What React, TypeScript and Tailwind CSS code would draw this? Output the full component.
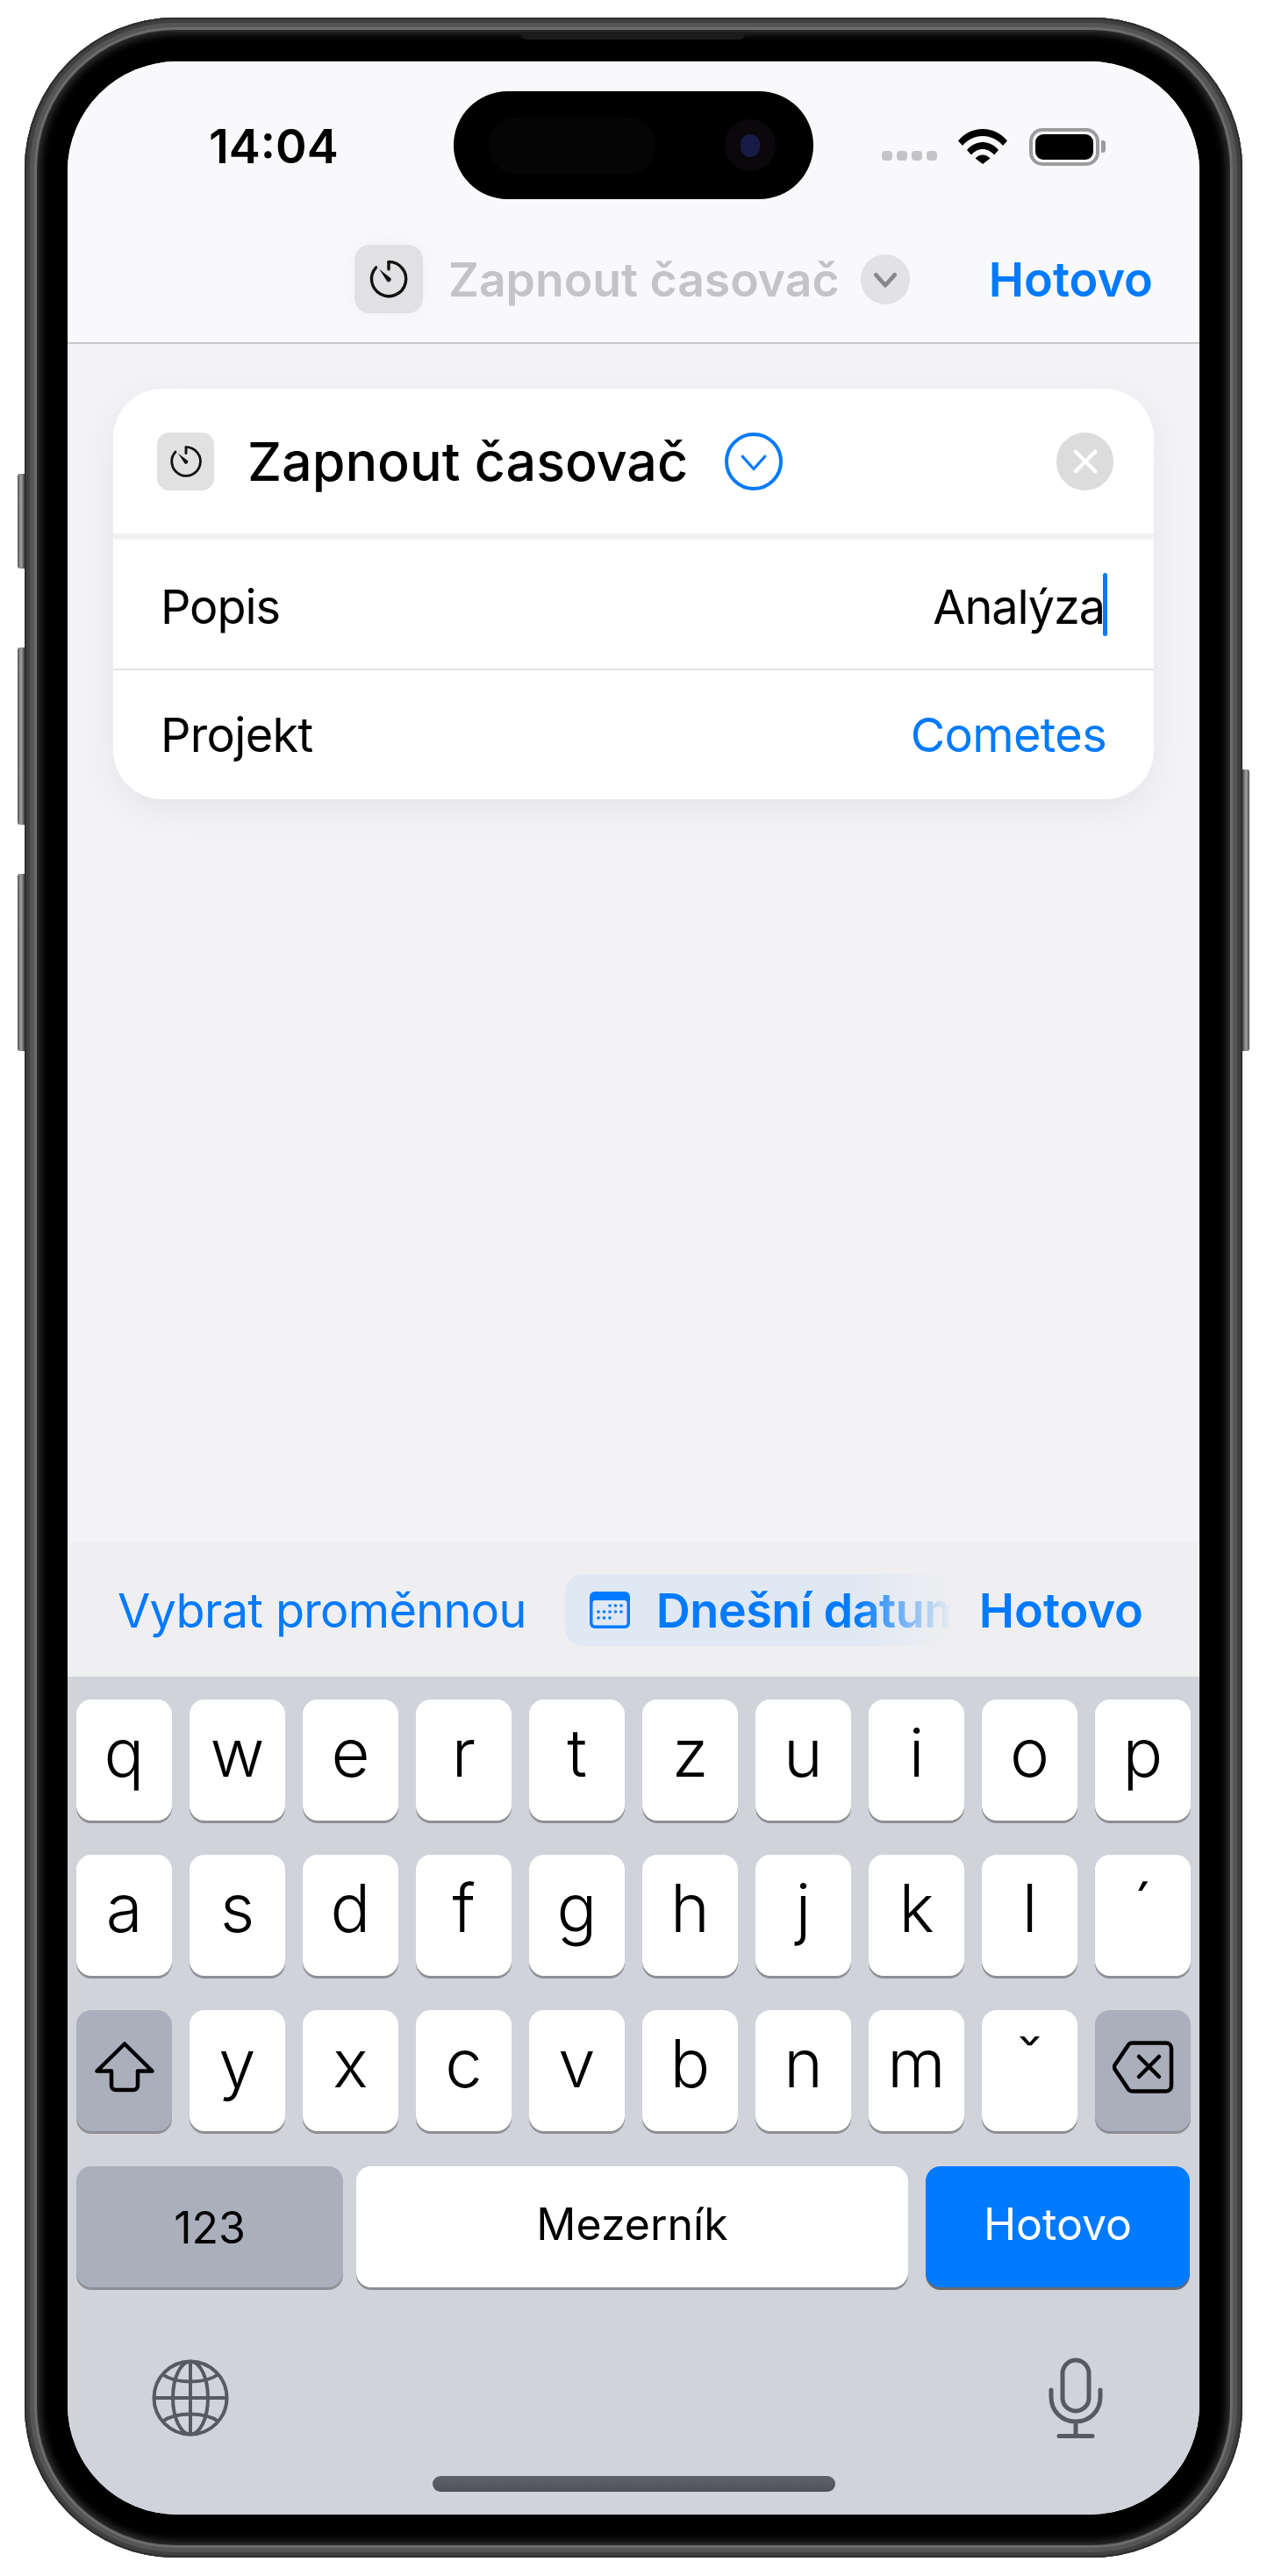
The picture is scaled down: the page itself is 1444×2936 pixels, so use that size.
const rows = [
  ["q", "w", "e", "r", "t", "z", "u", "i", "o", "p"],
  ["a", "s", "d", "f", "g", "h", "j", "k", "l", "´"],
];
const row3 = ["y", "x", "c", "v", "b", "n", "m", "ˇ"];

function TimerIcon({ className }: { className: string }) {
  return (
    <svg viewBox="0 0 24 24" fill="none" className={className}>
      <path d="M12 2.2a9.8 9.8 0 1 1-7.2 3.2" stroke="#111" strokeWidth="1.7" strokeLinecap="round" />
      <path d="M12 2.4v4" stroke="#111" strokeWidth="1.7" strokeLinecap="round" />
      <path d="M6.6 6.4l6.7 5.2a1.6 1.6 0 0 1-2 2z" fill="#111" />
    </svg>
  );
}

function Chevron({ className, color, width }: { className: string; color: string; width: number }) {
  return (
    <svg viewBox="0 0 24 24" fill="none" className={className}>
      <path d="M3.5 7.5L12 17l8.500-9.500" stroke={color} strokeWidth={width} strokeLinecap="round" strokeLinejoin="round" />
    </svg>
  );
}

function Key({ children }: { children: React.ReactNode }) {
  return (
    <div className="flex h-[138px] justify-center rounded-[17px] bg-white pt-[14px] text-[76px] font-[350] leading-[92px] text-black shadow-[0_3px_0_#8e8e93]">
      {children}
    </div>
  );
}

function GrayKey({ children }: { children: React.ReactNode }) {
  return (
    <div className="flex h-[138px] items-center justify-center rounded-[17px] bg-[#a9afbb] shadow-[0_3px_0_#8e8e93]">
      {children}
    </div>
  );
}

export default function App() {
  return (
    <div className="relative h-[2936px] w-[1444px] overflow-hidden bg-white pl-[28px] pt-[20px] font-['Inter',sans-serif]">
      {/* side buttons */}
      <div className="absolute left-[20px] top-[540px] h-[108px] w-[8px] rounded-l-[3px] bg-linear-to-r from-[#555] via-[#a5a5a5] to-[#444]" />
      <div className="absolute left-[20px] top-[738px] h-[202px] w-[8px] rounded-l-[3px] bg-linear-to-r from-[#555] via-[#a5a5a5] to-[#444]" />
      <div className="absolute left-[20px] top-[996px] h-[202px] w-[8px] rounded-l-[3px] bg-linear-to-r from-[#555] via-[#a5a5a5] to-[#444]" />
      <div className="absolute left-[1416px] top-[877px] h-[321px] w-[8px] rounded-r-[3px] bg-linear-to-l from-[#555] via-[#a5a5a5] to-[#444]" />

      {/* frame */}
      <div className="h-[2895px] w-[1388px] rounded-[172px] bg-[#2a2a2c] p-[16px] shadow-[inset_0_0_0_2px_#2e2e30,inset_0_0_0_6px_#404042,inset_0_0_0_11px_#555556,inset_0_0_0_14px_#6c6c6c]">
        <div className="relative h-[2863px] w-[1356px] rounded-[156px] bg-black px-[33px] py-[34px] shadow-[inset_0_0_10px_2px_#333]">
          <div className="absolute left-[550px] top-0 h-[9px] w-[255px] rounded-b-[6px] bg-[#1b1b1c]" />

          {/* screen */}
          <div className="relative flex h-[2796px] w-[1290px] flex-col overflow-hidden rounded-[125px] bg-[#f2f2f7]">
            {/* dynamic island */}
            <div className="absolute left-[440px] top-[34px] z-10 flex h-[123px] w-[410px] items-center justify-between rounded-[62px] bg-black pl-[40px] pr-[43px]">
              <div className="h-[66px] w-[190px] rounded-[33px] bg-[#050505]" />
              <div className="flex h-[59px] w-[58px] items-center justify-center rounded-full bg-[#0b080b]">
                <div className="h-[26px] w-[22px] rounded-full bg-[#171b45]" />
              </div>
            </div>

            {/* top bar */}
            <div className="flex h-[322px] flex-col border-b-2 border-[#c6c6c8] bg-[#f9f9fb] pt-[67px]">
              <div className="flex h-[60px] items-center pl-[161px] pr-[107px]">
                <span className="text-[54px] font-semibold leading-none text-black">14:04</span>
                <div className="ml-auto mt-[20px] flex gap-[5px]">
                  <div className="h-[11px] w-[12px] rounded-[4px] bg-[#c4c4c6]" />
                  <div className="h-[11px] w-[12px] rounded-[4px] bg-[#c4c4c6]" />
                  <div className="h-[11px] w-[12px] rounded-[4px] bg-[#c4c4c6]" />
                  <div className="h-[11px] w-[12px] rounded-[4px] bg-[#c4c4c6]" />
                </div>
                <svg viewBox="0 0 56 40" className="ml-[24px] h-[40px] w-[56px]">
                  <path d="M0 13.500C7 5 17 0 28 0s21 5 28 13.500l-5 5.500C45 12 37 8 28 8S11 12 5 19z" fill="#000" />
                  <path d="M10 24C14.500 18.500 21 15 28 15s13.500 3.500 18 9l-5 5.500C37.500 25.500 33 23 28 23s-9.500 2.500-13 6.500z" fill="#000" />
                  <path d="M19.500 33.500C22 31 25 29.500 28 29.500s6 1.500 8.500 4L28 40z" fill="#000" />
                </svg>
                <div className="ml-[25px] flex items-center">
                  <div className="h-[43px] w-[80px] rounded-[15px] border-[4px] border-[#9c9c9e] p-[3px]">
                    <div className="h-full w-full rounded-[9px] bg-black" />
                  </div>
                  <div className="ml-[2px] h-[14px] w-[5px] rounded-r-[3px] bg-[#9c9c9e]" />
                </div>
              </div>

              <div className="mt-[82px] flex h-[78px] items-center pl-[327px] pr-[53px]">
                <div className="flex h-[78px] w-[78px] items-center justify-center rounded-[17px] bg-[#e1e1e4] shadow-[0_0_30px_rgba(0,0,0,0.04)]">
                  <TimerIcon className="h-[48px] w-[48px]" />
                </div>
                <span className="ml-[29px] pt-[2px] text-[53.5px] font-semibold leading-none text-[#c4c4c8]">Zapnout časovač</span>
                <div className="ml-[24px] flex h-[57px] w-[56px] items-center justify-center rounded-full bg-[#e2e2e6]">
                  <Chevron className="mt-[2px] h-[30px] w-[30px]" color="#88888c" width={3.8} />
                </div>
                <span className="ml-auto pt-[2px] text-[54px] font-semibold leading-none text-[#007aff]">Hotovo</span>
              </div>
            </div>

            {/* action card */}
            <div className="flex-1 px-[52px] pt-[51px]">
              <div className="overflow-hidden rounded-[56px] bg-white shadow-[0_12px_40px_rgba(0,0,0,0.06)]">
                <div className="flex h-[165px] items-center pl-[50px] pr-[46px]">
                  <div className="flex h-[66px] w-[65px] items-center justify-center rounded-[14px] bg-[#e1e1e1]">
                    <TimerIcon className="h-[40px] w-[40px]" />
                  </div>
                  <span className="ml-[38px] pt-[2px] text-[61px] font-medium leading-none text-black">Zapnout časovač</span>
                  <div className="ml-[42px] flex h-[66px] w-[66px] items-center justify-center rounded-full border-[4px] border-[#007aff]">
                    <Chevron className="mt-[3px] h-[36px] w-[36px]" color="#007aff" width={2.2} />
                  </div>
                  <div className="ml-auto flex h-[66px] w-[65px] items-center justify-center rounded-full bg-[#dcdcdc]">
                    <svg viewBox="0 0 24 24" className="h-[30px] w-[30px]" fill="none">
                      <path d="M3 3l18 18M21 3L3 21" stroke="#fff" strokeWidth="3.600" strokeLinecap="round" />
                    </svg>
                  </div>
                </div>
                <div className="h-[7px] bg-[#f1f1f2]" />
                <div className="flex h-[147px] items-center pl-[54px] pr-[53px] pt-[6px] text-[54px] leading-none tracking-[-0.02em] text-black">
                  <span>Popis</span>
                  <span className="ml-auto">Analýza</span>
                  <div className="-ml-[2px] -mt-[6px] h-[72px] w-[5px] rounded-[3px] bg-[#007aff]" />
                </div>
                <div className="flex h-[149px] items-center border-t-2 border-[#e2e2e4] pl-[54px] pr-[54px] text-[54px] leading-none tracking-[-0.012em] text-black">
                  <span>Projekt</span>
                  <span className="ml-auto text-[#007aff]">Cometes</span>
                </div>
              </div>
            </div>

            {/* accessory bar */}
            <div className="flex h-[153px] items-center bg-[#efeff1] pl-[57px] pt-[2px] text-[54px] leading-none text-[#007aff]">
              <span className="tracking-[-0.012em]">Vybrat proměnnou</span>
              <div className="ml-[44px] -mt-[2px] flex h-[82px] w-[442px] items-center overflow-hidden whitespace-nowrap rounded-l-[20px] bg-[#e0e8f3] pl-[28px] pt-[2px] [mask-image:linear-gradient(to_right,black_75%,transparent_100%)]">
                <svg viewBox="0 0 46 42" className="-mt-[2px] h-[42px] w-[46px] shrink-0">
                  <rect width="46" height="42" rx="6" fill="#007aff" />
                  <rect x="3.500" y="10" width="39" height="28.500" rx="3" fill="#e0e8f3" />
                  <g fill="#007aff">
                    <circle cx="23" cy="16" r="1.800" />
                    <circle cx="29.500" cy="16" r="1.800" />
                    <circle cx="36" cy="16" r="1.800" />
                    <circle cx="10" cy="23" r="1.800" />
                    <circle cx="16.500" cy="23" r="1.800" />
                    <circle cx="23" cy="23" r="1.800" />
                    <circle cx="29.500" cy="23" r="1.800" />
                    <circle cx="36" cy="23" r="1.800" />
                    <circle cx="10" cy="30" r="1.800" />
                    <circle cx="16.500" cy="30" r="1.800" />
                    <circle cx="23" cy="30" r="1.800" />
                  </g>
                </svg>
                <span className="ml-[30px] font-semibold tracking-[-0.01em]">Dnešní datum</span>
              </div>
              <span className="ml-[30px] font-semibold">Hotovo</span>
            </div>

            {/* keyboard */}
            <div className="h-[955px] bg-[#d0d3da] pt-[26px]">
              <div className="flex flex-col gap-[39px] px-[10px]">
                {rows.map((row) => (
                  <div key={row[0]} className="grid grid-cols-10 gap-x-5">
                    {row.map((k) => (
                      <Key key={k}>{k}</Key>
                    ))}
                  </div>
                ))}
                <div className="grid grid-cols-10 gap-x-5">
                  <GrayKey>
                    <svg viewBox="0 0 68 58" className="-mt-[9px] h-[58px] w-[68px]" fill="none">
                      <path d="M34 2.500L2.500 33.500H19V50a5 5 0 0 0 5 5h20a5 5 0 0 0 5-5V33.500H65.500z" stroke="#000" strokeWidth="4.500" strokeLinejoin="round" />
                    </svg>
                  </GrayKey>
                  {row3.map((k) => (
                    <Key key={k}>{k}</Key>
                  ))}
                  <GrayKey>
                    <svg viewBox="0 0 70 60" className="-mt-[9px] h-[60px] w-[70px]" fill="none">
                      <path d="M22 2.500H61a6 6 0 0 1 6 6v43a6 6 0 0 1-6 6H22a5 5 0 0 1-3.500-1.500L3 33a5 5 0 0 1 0-6L18.500 4a5 5 0 0 1 3.500-1.500z" stroke="#000" strokeWidth="4.500" strokeLinejoin="round" />
                      <path d="M30 18l23 23M53 18L30 41" stroke="#000" strokeWidth="4.500" strokeLinecap="round" />
                    </svg>
                  </GrayKey>
                </div>
                <div className="mt-[1px] flex h-[138px] text-[50px] leading-none">
                  <div className="flex w-[304px] items-center justify-center rounded-[17px] bg-[#a9afbb] pt-[2px] text-black shadow-[0_3px_0_#8e8e93]">123</div>
                  <div className="ml-[15px] flex w-[629px] items-center justify-center rounded-[17px] bg-white pb-[7px] text-black shadow-[0_3px_0_#8e8e93]">Mezerník</div>
                  <div className="ml-[20px] flex w-[301px] items-center justify-center rounded-[17px] bg-[#007aff] pb-[7px] text-white shadow-[0_3px_0_#6b6b70]">Hotovo</div>
                </div>
              </div>

              <div className="mt-[80px] flex items-center justify-between pl-[96px] pr-[110px]">
                <svg viewBox="0 0 88 88" className="h-[88px] w-[88px]" fill="none" stroke="#555a64" strokeWidth="4">
                  <circle cx="44" cy="44" r="41.500" />
                  <ellipse cx="44" cy="44" rx="20" ry="41.500" />
                  <path d="M44 2.500v83M2.500 44h83" />
                  <path d="M12 17c8 6 20 8.500 32 8.500S68 23 76 17M12 71c8-6 20-8.500 32-8.500S68 65 76 71" />
                </svg>
                <svg viewBox="0 0 62 92" className="h-[92px] w-[62px]" fill="none" stroke="#555a64" strokeWidth="5" strokeLinecap="round">
                  <rect x="16" y="3" width="30" height="58" rx="15" />
                  <path d="M3 37v8c0 16 12 28 28 28s28-12 28-28v-8M31 73v16M12 89.500h38" />
                </svg>
              </div>

              <div className="mx-auto mt-[43px] h-[18px] w-[459px] rounded-full bg-linear-to-b from-[#606269] to-[#4f5259]" />
            </div>
          </div>
        </div>
      </div>
    </div>
  );
}
